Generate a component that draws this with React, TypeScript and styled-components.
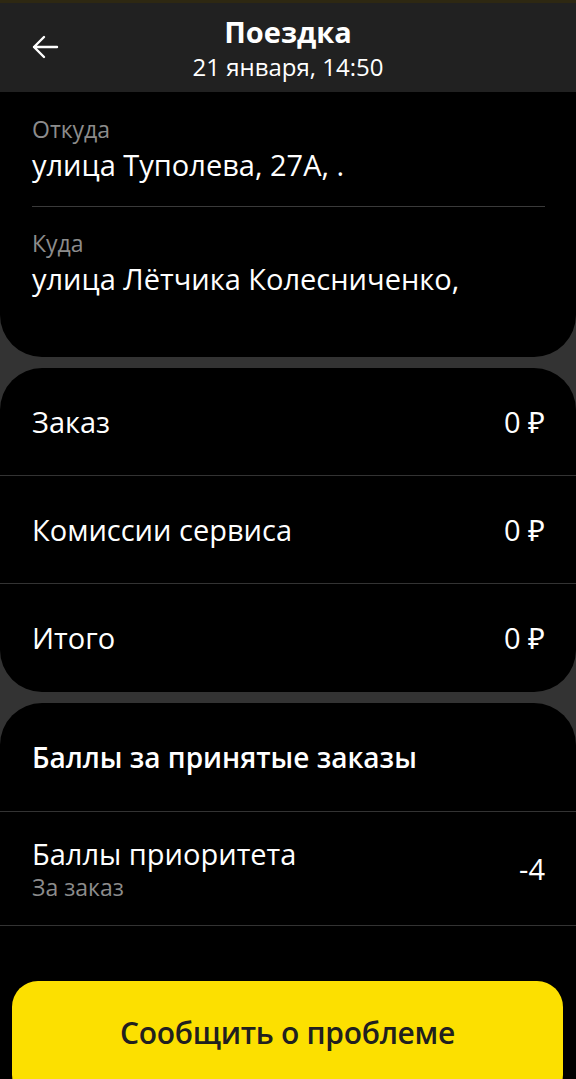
import styled, { createGlobalStyle } from 'styled-components'

const GlobalStyle = createGlobalStyle`
  html, body {
    margin: 0;
    padding: 0;
    background: #333333;
  }
  body {
    font-family: 'Open Sans', 'Noto Sans', 'DejaVu Sans', sans-serif;
    color: #ffffff;
    overflow: hidden;
  }
`

interface RowProps {
  label: string
  value: string
  sub?: string
  bold?: boolean
  last?: boolean
  height?: number
}

const PriceRow: React.FC<RowProps> = ({ label, value, sub, bold, last, height = 107 }) => (
  <Row $last={last} $height={height}>
    <RowText>
      <RowLabel $bold={bold}>{label}</RowLabel>
      {sub && <RowSub>{sub}</RowSub>}
    </RowText>
    {value && <RowValue>{value}</RowValue>}
  </Row>
)

const App: React.FC = () => {
  return (
    <Page>
      <GlobalStyle />
      <Header>
        <BackButton aria-label="Назад">
          <svg width="28" height="28" viewBox="0 0 28 28" fill="none">
            <path
              d="M26 14H3M13 4L3 14l10 10"
              stroke="#ffffff"
              strokeWidth="2.4"
              strokeLinecap="round"
              strokeLinejoin="round"
            />
          </svg>
        </BackButton>
        <HeaderTitle>Поездка</HeaderTitle>
        <HeaderSub>21 января, 14:50</HeaderSub>
      </Header>

      <RouteCard>
        <RoutePoint>
          <PointLabel>Откуда</PointLabel>
          <PointValue>улица Туполева, 27А, .</PointValue>
        </RoutePoint>
        <RoutePoint $last>
          <PointLabel>Куда</PointLabel>
          <PointValue>улица Лётчика Колесниченко,</PointValue>
        </RoutePoint>
      </RouteCard>

      <Card>
        <PriceRow label="Заказ" value="0 ₽" />
        <PriceRow label="Комиссии сервиса" value="0 ₽" />
        <PriceRow label="Итого" value="0 ₽" height={108} last />
      </Card>

      <Card $open>
        <PriceRow label="Баллы за принятые заказы" value="" height={108} bold />
        <PriceRow label="Баллы приоритета" sub="За заказ" value="-4" height={113} />
        <ButtonWrap>
          <ReportButton>Сообщить о проблеме</ReportButton>
        </ButtonWrap>
      </Card>
    </Page>
  )
}

const Page = styled.div`
  width: 576px;
  min-height: 1079px;
  display: flex;
  flex-direction: column;
  gap: 11px;
  background: #333333;
`

const Header = styled.header`
  position: relative;
  height: 92px;
  background: #212121;
  border-top: 3px solid #2e2812;
  display: flex;
  flex-direction: column;
  align-items: center;
  padding-top: 11px;
  box-sizing: border-box;
  margin-bottom: -11px;
`

const BackButton = styled.div`
  position: absolute;
  left: 31px;
  top: 30px;
  width: 28px;
  height: 28px;
`

const HeaderTitle = styled.div`
  font-size: 29px;
  line-height: 36px;
  font-weight: 700;
`

const HeaderSub = styled.div`
  font-size: 24px;
  line-height: 30px;
  margin-top: 2px;
`

const RouteCard = styled.section`
  background: #000000;
  border-radius: 0 0 42px 42px;
  padding: 23px 31px 0 32px;
  height: 265px;
  box-sizing: border-box;
`

const RoutePoint = styled.div<{ $last?: boolean }>`
  display: flex;
  flex-direction: column;
  padding-bottom: 23px;
  border-bottom: ${(p) => (p.$last ? 'none' : '1px solid #3a3a3a')};
  padding-top: ${(p) => (p.$last ? '22px' : '0')};
`

const PointLabel = styled.div`
  font-size: 23px;
  line-height: 28px;
  color: #8c8c8c;
`

const PointValue = styled.div`
  font-size: 29px;
  line-height: 36px;
  margin-top: 4px;
`

const Card = styled.section<{ $open?: boolean }>`
  background: #000000;
  border-radius: ${(p) => (p.$open ? '42px 42px 0 0' : '42px')};
  display: flex;
  flex-direction: column;
  flex: ${(p) => (p.$open ? '1' : 'none')};
`

const Row = styled.div<{ $last?: boolean; $height: number }>`
  height: ${(p) => p.$height}px;
  border-bottom: ${(p) => (p.$last ? 'none' : '1px solid #333333')};
  padding: 0 31px 0 32px;
  display: flex;
  align-items: center;
  justify-content: space-between;
  box-sizing: content-box;
`

const RowText = styled.div`
  display: flex;
  flex-direction: column;
`

const RowLabel = styled.div<{ $bold?: boolean }>`
  font-size: ${(p) => (p.$bold ? '28px' : '29px')};
  line-height: 34px;
  font-weight: ${(p) => (p.$bold ? 600 : 400)};
`

const RowSub = styled.div`
  font-size: 23px;
  line-height: 28px;
  color: #8c8c8c;
  margin-top: 2px;
`

const RowValue = styled.div`
  font-size: 29px;
  line-height: 34px;
`

const ButtonWrap = styled.div`
  padding: 55px 13px 0 12px;
`

const ReportButton = styled.button`
  width: 100%;
  height: 120px;
  border: none;
  border-radius: 26px;
  background: #fce000;
  color: #21201f;
  font-family: 'Open Sans', 'Noto Sans', sans-serif;
  font-size: 30px;
  font-weight: 600;
  letter-spacing: -0.3px;
  padding: 0 0 18px;
`

export default App
